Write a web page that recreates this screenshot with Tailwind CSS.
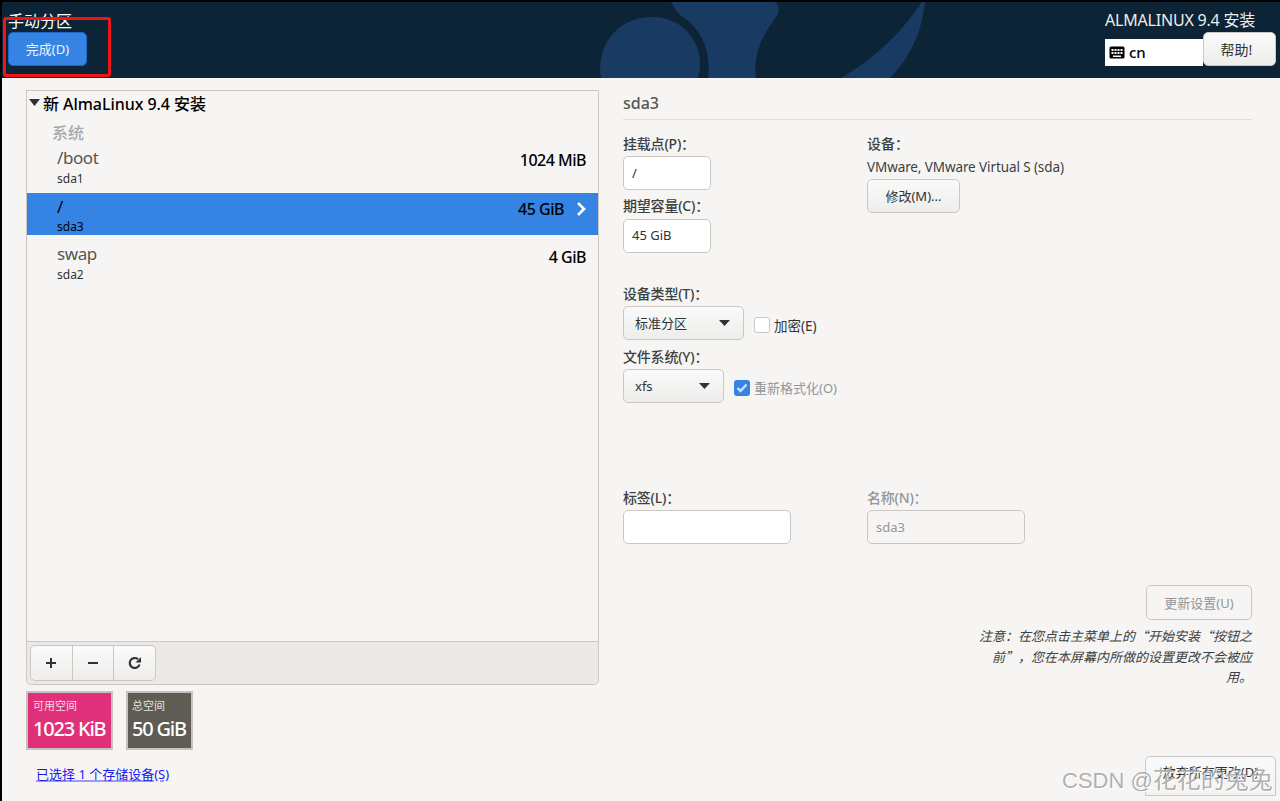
<!DOCTYPE html>
<html lang="zh-CN">
<head>
    <meta charset="UTF-8">
    <title>手动分区</title>
    <script src="https://cdn.jsdelivr.net/npm/@tailwindcss/browser@4"></script>
</head>
<body class="relative w-[1280px] h-[801px] overflow-hidden bg-[#f6f5f4] text-[#2e3436] font-['Noto_Sans','Noto_Sans_CJK_SC',sans-serif] text-[13px]">
    <!-- header -->
    <header class="relative h-[78px] bg-[#0d2336] border-t-2 border-black overflow-hidden flex justify-between">
        <svg class="absolute left-[590px] top-0" width="340" height="76" viewBox="0 0 340 76" fill="#183a63">
            <path d="M11 76 C6 50 22 15 62 15 C92 15 110 38 110 62 C110 68 109 72 108 76 Z"/>
            <path d="M81 0 H185 C190 4 190 10 186 15 C172 34 163 52 166 76 H118 C121 50 112 28 94 16 C88 12 84 6 81 0 Z"/>
            <path d="M332 0 H335 C332 28 322 54 300 76 H251 C285 56 312 30 332 0 Z"/>
        </svg>
        <div class="relative pl-[8px]">
            <h1 class="text-[16px] leading-[20px] mt-[9px] text-white">手动分区</h1>
            <button class="mt-[1px] w-[79px] h-[34px] pt-[2px] rounded-[5px] bg-[#3584e4] border border-[#1b6acb] text-[#eef4fc] text-[13px]">完成(D)</button>
        </div>
        <div class="relative w-[171px] mr-[4px]">
            <div class="text-[16px] leading-[20px] mt-[8px] text-[#eeeeec] tracking-[-0.2px] whitespace-nowrap">ALMALINUX 9.4 安装</div>
            <div class="flex">
                <div class="flex items-center gap-[4px] w-[98px] h-[27px] mt-[9px] pl-[4px] bg-white text-black text-[15px] font-medium">
                    <svg width="16" height="14" viewBox="0 0 16 14"><rect x="0.5" y="0.5" width="15" height="12" rx="1.5" fill="black"/><path d="M2.5 3h2v2h-2zM5.5 3h2v2h-2zM8.5 3h2v2h-2zM11.5 3h2v2h-2zM2.5 6h2v2h-2zM5.5 6h2v2h-2zM8.5 6h2v2h-2zM11.5 6h2v2h-2zM4 9.500h8v1.500h-8z" fill="white"/></svg>
                    <span>cn</span>
                </div>
                <button class="w-[73px] h-[34px] mt-[2px] pt-[1px] pr-[6px] rounded-[5px] border border-[#cdc7c2] bg-gradient-to-b from-[#fafafa] to-[#ededeb] text-[#2e3436] text-[14px]">帮助!</button>
            </div>
        </div>
    </header>

    <div class="absolute left-0 top-0 w-[2px] h-full bg-black"></div>
    <div class="absolute left-[3px] top-[17px] w-[108px] h-[60px] border-[3px] border-[#f01414] rounded-[3px]"></div>

    <main class="flex pl-[26px] pt-[12px]">
        <!-- left column -->
        <section class="w-[573px]">
            <div class="h-[595px] border border-[#cdc7c2] rounded-b-[5px] flex flex-col">
                <div class="flex-1">
                    <div class="flex items-center h-[27px] pb-[2px] pl-[2px] text-[16px] font-medium text-black tracking-[-0.05px] whitespace-nowrap">
                        <svg class="mr-[3px] mt-[-2px]" width="11" height="7" viewBox="0 0 11 7" fill="#2e3436"><path d="M0 0h11L5.500 7z"/></svg>
                        新 AlmaLinux 9.4 安装
                    </div>
                    <div class="pl-[25px] h-[28px] leading-[30px] text-[16px] font-medium text-[#a5a9aa]">系统</div>
                    <div class="flex justify-between h-[47px] pl-[30px] pr-[12px]">
                        <div><div class="text-[17px] leading-[24px] text-[#555753] tracking-[-0.4px]">/boot</div><div class="text-[12px] leading-[16px] mt-[1px]">sda1</div></div>
                        <div class="text-[16px] font-medium text-black leading-[20px] mt-[4px] tracking-[-0.5px]">1024 MiB</div>
                    </div>
                    <div class="flex justify-between h-[42px] pl-[30px] pr-[12px] bg-[#3584e4] text-black">
                        <div><div class="text-[17px] leading-[24px] mt-[2px]">/</div><div class="text-[12px] leading-[16px]">sda3</div></div>
                        <div class="flex items-start">
                            <span class="text-[16px] font-medium leading-[20px] mt-[6px] tracking-[-0.5px]">45 GiB</span>
                            <svg class="ml-[12px] mt-[8px]" width="10" height="16" viewBox="0 0 10 16" fill="none" stroke="white" stroke-width="2.600"><path d="M2 2l6 6-6 6"/></svg>
                        </div>
                    </div>
                    <div class="flex justify-between h-[47px] pl-[30px] pr-[12px]">
                        <div><div class="text-[17px] leading-[24px] text-[#555753] mt-[7px] tracking-[-0.4px]">swap</div><div class="text-[12px] leading-[16px] mt-[1px]">sda2</div></div>
                        <div class="text-[16px] font-medium text-black leading-[20px] mt-[12px] tracking-[-0.5px]">4 GiB</div>
                    </div>
                </div>
                <div class="h-[43px] border-t border-[#cdc7c2] bg-[#ebe8e5] rounded-b-[5px] pl-[3px] pt-[3px]">
                    <div class="flex w-[126px] h-[36px] rounded-[5px] border border-[#cdc7c2] bg-gradient-to-b from-[#fafafa] to-[#ededeb] divide-x divide-[#cdc7c2]">
                        <div class="flex-1 flex items-center justify-center"><svg width="12" height="12" viewBox="0 0 12 12" fill="#2e3436"><path d="M5 1h2v4h4v2H7v4H5V7H1V5h4z"/></svg></div>
                        <div class="flex-1 flex items-center justify-center"><svg width="12" height="12" viewBox="0 0 12 12" fill="#2e3436"><path d="M1 5h10v2H1z"/></svg></div>
                        <div class="flex-1 flex items-center justify-center"><svg width="14" height="14" viewBox="0 0 14 14" fill="none"><path d="M11.500 8.500A5 5 0 1 1 10 3.200" stroke="#2e3436" stroke-width="2.200"/><path d="M13 1v5.500H7.500z" fill="#2e3436"/></svg></div>
                    </div>
                </div>
            </div>
            <div class="flex gap-[13px] mt-[6px]">
                <div class="w-[87px] h-[59px] bg-[#e0307a] border-2 border-[#c6c2be] text-white pl-[5px] whitespace-nowrap">
                    <div class="text-[11px] leading-[14px] mt-[6px] text-[#f8d9e6]">可用空间</div>
                    <div class="text-[20px] leading-[26px] font-medium mt-[3px] tracking-[-1.2px]">1023 KiB</div>
                </div>
                <div class="w-[67px] h-[59px] bg-[#5e5c54] border-2 border-[#c6c2be] text-white pl-[4px] whitespace-nowrap">
                    <div class="text-[11px] leading-[14px] mt-[6px] text-[#e4e4e0]">总空间</div>
                    <div class="text-[20px] leading-[26px] font-medium mt-[3px] tracking-[-1.2px]">50 GiB</div>
                </div>
            </div>
            <a class="block ml-[10px] mt-[14px] leading-[20px] text-[13px] text-[#1a1af0] underline decoration-[#9a9af8] decoration-2" href="#">已选择 1 个存储设备(S)</a>
        </section>

        <!-- right column -->
        <section class="ml-[24px] w-[629px]">
            <h2 class="text-[16px] font-medium leading-[20px] text-[#555753] mt-[3px] pb-[6px] border-b border-[#dedddb]">sda3</h2>
            <div class="flex mt-[14px]">
                <div class="w-[244px]">
                    <label class="block font-medium text-[14px] leading-[20px] text-[#3d3f40] tracking-[-0.2px]">挂载点(P)：</label>
                    <div class="w-[88px] h-[34px] mt-[2px] px-[8px] leading-[32px] bg-white border border-[#cdc7c2] rounded-[5px]">/</div>
                    <label class="block font-medium text-[14px] leading-[20px] mt-[6px] text-[#3d3f40] tracking-[-0.2px]">期望容量(C)：</label>
                    <div class="w-[88px] h-[34px] mt-[3px] px-[8px] leading-[31px] bg-white border border-[#cdc7c2] rounded-[5px]">45 GiB</div>
                    <label class="block font-medium text-[14px] leading-[20px] mt-[31px] text-[#3d3f40] tracking-[-0.2px]">设备类型(T)：</label>
                    <div class="flex items-center mt-[2px]">
                        <div class="flex items-center justify-between w-[121px] h-[34px] px-[11px] pt-[2px] border border-[#cdc7c2] rounded-[5px] bg-gradient-to-b from-[#fafafa] to-[#ededeb]">
                            <span>标准分区</span>
                            <svg class="mr-[2px] mb-[2px]" width="11" height="6" viewBox="0 0 11 6" fill="#2e3436"><path d="M0 0h11L5.500 6z"/></svg>
                        </div>
                        <span class="w-[16px] h-[16px] ml-[10px] mt-[3px] bg-white border border-[#cdc7c2] rounded-[3px]"></span>
                        <span class="ml-[4px] mt-[7px] text-[13.500px]">加密(E)</span>
                    </div>
                    <label class="block font-medium text-[14px] leading-[20px] mt-[7px] text-[#3d3f40] tracking-[-0.2px]">文件系统(Y)：</label>
                    <div class="flex items-center mt-[2px]">
                        <div class="flex items-center justify-between w-[101px] h-[34px] px-[11px] pt-[2px] border border-[#cdc7c2] rounded-[5px] bg-gradient-to-b from-[#fafafa] to-[#ededeb]">
                            <span>xfs</span>
                            <svg class="mr-[2px] mb-[2px]" width="11" height="6" viewBox="0 0 11 6" fill="#2e3436"><path d="M0 0h11L5.500 6z"/></svg>
                        </div>
                        <span class="flex items-center justify-center w-[16px] h-[16px] ml-[10px] mt-[3px] bg-[#3584e4] rounded-[3px]">
                            <svg width="12" height="10" viewBox="0 0 12 10" fill="none" stroke="#cfe2f9" stroke-width="2.400"><path d="M1.500 5l3 3 6-6.500"/></svg>
                        </span>
                        <span class="ml-[4px] mt-[6px] text-[#92959a]">重新格式化(O)</span>
                    </div>
                </div>
                <div>
                    <label class="block font-medium text-[14px] leading-[20px] text-[#3d3f40]">设备：</label>
                    <div class="leading-[20px] mt-[3px] text-[#3d3f40] text-[13.500px] tracking-[-0.1px] whitespace-nowrap">VMware, VMware Virtual S (sda)</div>
                    <button class="block w-[93px] h-[34px] mt-[2px] pt-[2px] rounded-[5px] border border-[#cdc7c2] bg-gradient-to-b from-[#fafafa] to-[#ededeb]">修改(M)...</button>
                </div>
            </div>
            <div class="flex mt-[85px]">
                <div class="w-[244px]">
                    <label class="block font-medium text-[14px] leading-[20px] text-[#3d3f40] tracking-[-0.2px]">标签(L)：</label>
                    <div class="w-[168px] h-[34px] mt-[2px] bg-white border border-[#cdc7c2] rounded-[5px]"></div>
                </div>
                <div>
                    <label class="block font-medium text-[14px] leading-[20px] text-[#92959a] tracking-[-0.2px]">名称(N)：</label>
                    <div class="w-[158px] h-[34px] mt-[2px] px-[8px] leading-[32px] bg-[#f6f5f4] border border-[#cdc7c2] rounded-[5px] text-[#92959a]">sda3</div>
                </div>
            </div>
            <div class="flex flex-col items-end mt-[41px]">
                <button class="w-[106px] h-[35px] pt-[2px] rounded-[5px] border border-[#cdc7c2] text-[#92959a]">更新设置(U)</button>
                <p class="w-[280px] mt-[6px] text-right italic leading-[20.500px] text-[#3d3f40] font-['Noto_Sans_CJK_SC',sans-serif]">注意：在您点击主菜单上的“开始安装“按钮之前”，您在本屏幕内所做的设置更改不会被应用。</p>
            </div>
        </section>
    </main>

    <button class="absolute left-[1145px] top-[756px] w-[131px] h-[40px] pb-[6px] rounded-t-[5px] border border-[#cdc7c2] bg-gradient-to-b from-[#fafafa] to-[#f3f2f0]">放弃所有更改(D)</button>
    <div class="absolute left-[1062px] top-[766px] text-[22px] leading-[28px] text-[#8f8f8f]/70 [text-shadow:1px_1px_1px_#ffffff] whitespace-nowrap font-['Liberation_Sans','Noto_Sans_CJK_SC',sans-serif]">CSDN @<span class="text-[24px]">花花的兔兔</span></div>
</body>
</html>
